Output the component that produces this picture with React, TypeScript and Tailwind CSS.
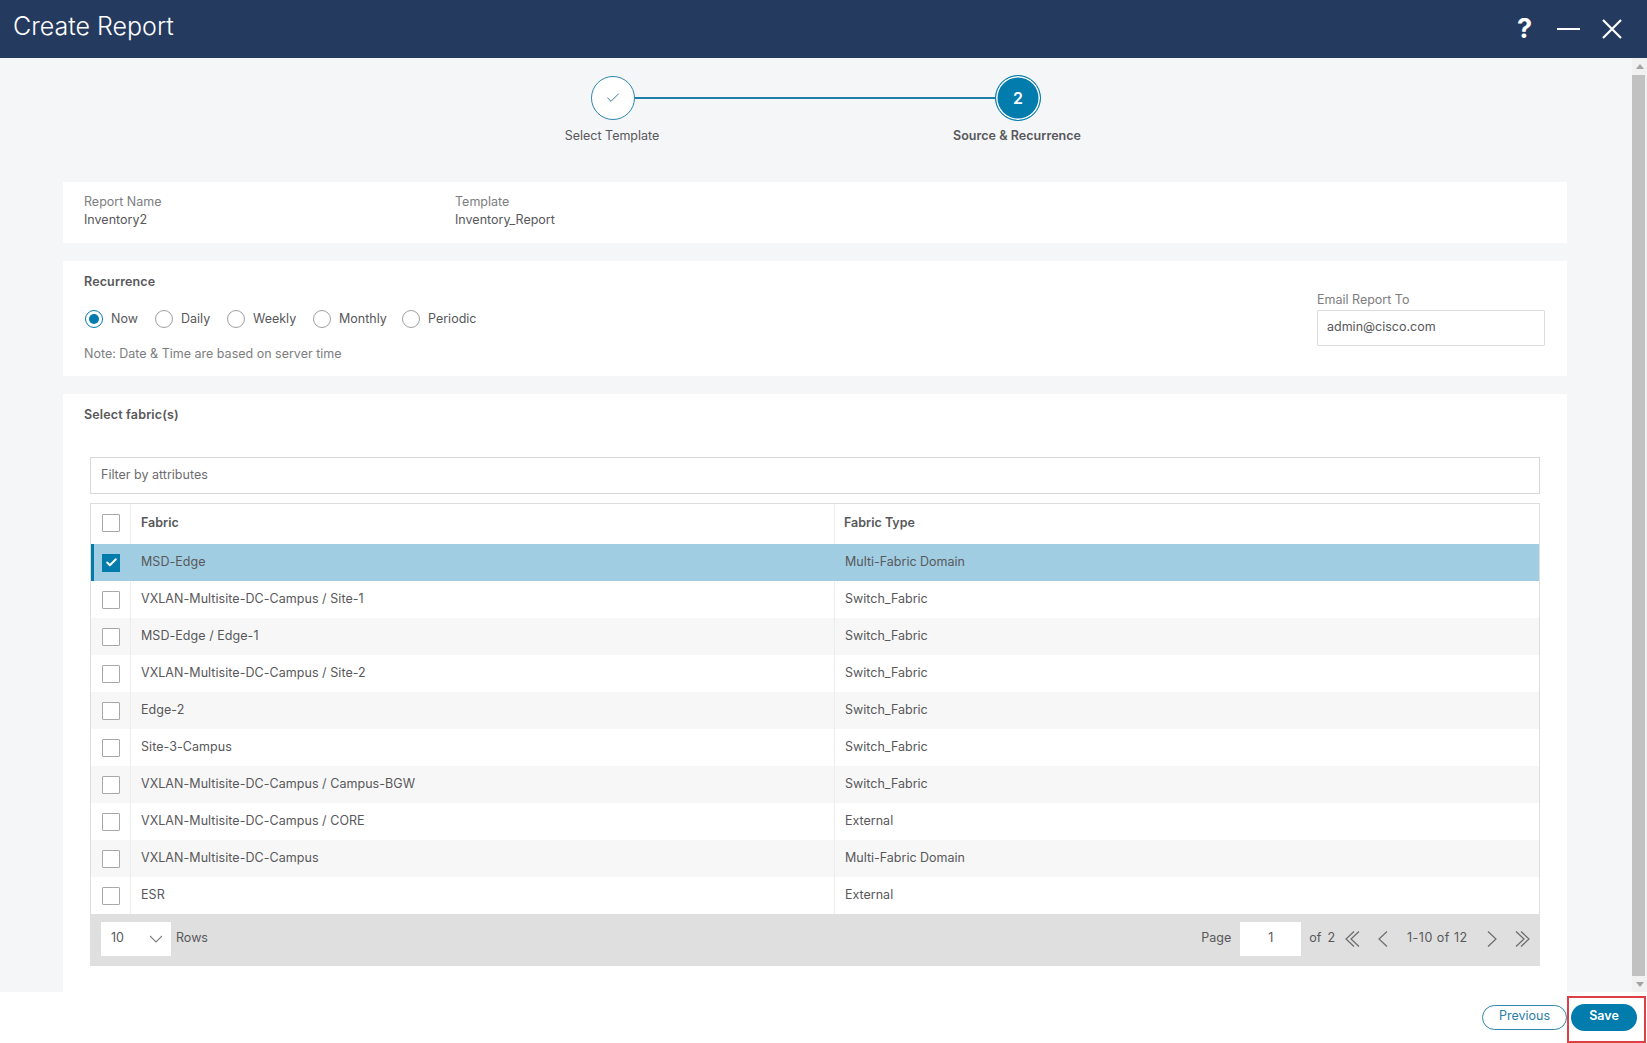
import React from "react";
import { Check } from "lucide-react";

const rows = [
  ["MSD-Edge", "Multi-Fabric Domain"],
  ["VXLAN-Multisite-DC-Campus / Site-1", "Switch_Fabric"],
  ["MSD-Edge / Edge-1", "Switch_Fabric"],
  ["VXLAN-Multisite-DC-Campus / Site-2", "Switch_Fabric"],
  ["Edge-2", "Switch_Fabric"],
  ["Site-3-Campus", "Switch_Fabric"],
  ["VXLAN-Multisite-DC-Campus / Campus-BGW", "Switch_Fabric"],
  ["VXLAN-Multisite-DC-Campus / CORE", "External"],
  ["VXLAN-Multisite-DC-Campus", "Multi-Fabric Domain"],
  ["ESR", "External"],
];

const radios = [
  ["Now", "w-[70px]"],
  ["Daily", "w-[72px]"],
  ["Weekly", "w-[86px]"],
  ["Monthly", "w-[89px]"],
  ["Periodic", ""],
];

function Box({ checked }: { checked?: boolean }) {
  if (checked) {
    return (
      <div className="w-[18px] h-[18px] bg-[#017cad] flex items-center justify-center">
        <Check size={13} strokeWidth={3.5} color="#fff" />
      </div>
    );
  }
  return <div className="w-[18px] h-[18px] bg-white border border-[#a8a8a8] rounded-[1px]" />;
}

function Chev({ dir, double }: { dir: "l" | "r"; double?: boolean }) {
  const w = double ? 16 : 11;
  const pts = (x: number) =>
    dir === "l" ? `${x + 8},0.5 ${x},8 ${x + 8},15.5` : `${x},0.5 ${x + 8},8 ${x},15.5`;
  return (
    <svg width={w} height={16} viewBox={`0 0 ${w} 16`} fill="none" stroke="#6b6b6b" strokeWidth="1.2">
      <polyline points={pts(1)} />
      {double && <polyline points={pts(6)} />}
    </svg>
  );
}

export default function App() {
  return (
    <div className="w-[1647px] h-[1043px] overflow-hidden bg-white flex flex-col font-['Inter','Liberation_Sans',sans-serif] text-[12.5px] text-[#58585b]">
      <header className="h-[58px] shrink-0 bg-[#243b5f] flex items-center text-white">
        <div className="ml-[13px] mb-[6px] text-[25px] leading-[46px] font-light flex-1">Create Report</div>
        <div className="font-bold text-[27px] leading-none mr-[25px] mb-[2px]">?</div>
        <div className="w-[23px] h-[2.5px] bg-white mr-[22px]" />
        <svg className="mr-[25px]" width="20" height="20" viewBox="0 0 20 20" stroke="#fff" strokeWidth="2.2" fill="none">
          <path d="M1 1 L19 19 M19 1 L1 19" />
        </svg>
      </header>

      <div className="h-[934px] shrink-0 flex">
        <main className="w-[1632px] bg-[#f5f6f8] pl-[63px] pr-[65px] flex flex-col">
          <div className="pt-[17px] h-[124px] shrink-0">
            <div className="flex items-center ml-[528px] w-[450px]">
              <div className="w-[44px] h-[44px] rounded-full bg-white border border-[#2d86ad] flex items-center justify-center shrink-0">
                <Check size={16} strokeWidth={1.4} color="#2a6a93" />
              </div>
              <div className="h-[1.5px] flex-1 bg-[#1f7fa8]" />
              <div className="w-[46px] h-[46px] rounded-full bg-[#017cad] border border-[#017cad] shadow-[inset_0_0_0_1.5px_#ffffff] flex items-center justify-center shrink-0 text-white font-semibold text-[16px]">
                2
              </div>
            </div>
            <div className="flex mt-[6px] ml-[449px] leading-[18px]">
              <div className="w-[200px] text-center">Select Template</div>
              <div className="w-[205px]" />
              <div className="w-[200px] text-center font-semibold tracking-[0.05px]">Source &amp; Recurrence</div>
            </div>
          </div>

          <section className="h-[61px] shrink-0 bg-white pl-[21px] pt-[11px] flex leading-[18px]">
            <div className="w-[371px]">
              <div className="text-[#7d7d80]">Report Name</div>
              <div>Inventory2</div>
            </div>
            <div>
              <div className="text-[#7d7d80]">Template</div>
              <div>Inventory_Report</div>
            </div>
          </section>

          <section className="h-[115px] shrink-0 mt-[18px] bg-white px-[22px] flex justify-between">
            <div>
              <div className="mt-[12px] ml-[-1px] leading-[18px] font-semibold tracking-[0.15px]">Recurrence</div>
              <div className="mt-[18px] flex items-center h-[20px]">
                {radios.map(([label, w], i) => (
                  <div key={label} className={`flex items-center ${w}`}>
                    <div className={`w-[18px] h-[18px] rounded-full bg-white flex items-center justify-center ${i === 0 ? "border-[1.5px] border-[#017cad]" : "border border-[#a0a0a0]"}`}>
                      {i === 0 && <div className="w-[10px] h-[10px] rounded-full bg-[#017cad]" />}
                    </div>
                    <span className="ml-[8px]">{label}</span>
                  </div>
                ))}
              </div>
              <div className="mt-[16px] ml-[-1px] leading-[18px] text-[#7d7d80]">Note: Date &amp; Time are based on server time</div>
            </div>
            <div className="w-[228px] pt-[30px]">
              <div className="leading-[18px] text-[#7d7d80]">Email Report To</div>
              <div className="mt-[1px] h-[36px] pb-[1px] border border-[#dcdcdc] rounded-[1px] flex items-center pl-[9px]">admin@cisco.com</div>
            </div>
          </section>

          <section className="h-[598px] shrink-0 mt-[18px] bg-white px-[27px] flex flex-col">
            <div className="ml-[-6px] mt-[12px] leading-[18px] font-semibold tracking-[0.15px]">Select fabric(s)</div>
            <div className="mt-[33px] h-[37px] pb-[1px] shrink-0 border border-[#d8d8d8] flex items-center pl-[10px] text-[#6d6d70]">Filter by attributes</div>
            <div className="mt-[9px] border-x border-t border-[#dedede]">
              <div className="h-[40px] flex items-center font-semibold">
                <div className="w-[40px] h-full pb-[2px] border-r border-[#ececec] flex items-center pl-[11px] shrink-0"><Box /></div>
                <div className="w-[704px] h-full pb-[1px] border-r border-[#ececec] flex items-center pl-[10px] shrink-0">Fabric</div>
                <div className="pl-[9px] pb-[1px]">Fabric Type</div>
              </div>
              {rows.map(([name, type], i) => {
                const sel = i === 0;
                return (
                  <div key={name} className={`h-[37px] flex items-center ${sel ? "bg-[#a1cde2] border-l-[3px] border-[#017cad]" : i % 2 === 0 ? "bg-[#f7f7f7]" : "bg-white"}`}>
                    <div className={`${sel ? "w-[37px] pl-[8px]" : "w-[40px] pl-[11px] border-r border-[#ececec]"} h-full flex items-center shrink-0`}><Box checked={sel} /></div>
                    <div className={`w-[704px] h-full pb-[1px] flex items-center pl-[10px] shrink-0 tracking-[0.05px] ${sel ? "" : "border-r border-[#ececec]"}`}>{name}</div>
                    <div className="pl-[10px] pb-[1px]">{type}</div>
                  </div>
                );
              })}
            </div>
            <div className="h-[52px] pb-[3px] bg-[#dfdfdf] flex items-center pl-[11px] pr-[9px] shrink-0">
              <div className="w-[70px] h-[34px] bg-white flex items-center justify-between pl-[10px] pr-[8px]">
                <span>10</span>
                <svg width="14" height="8" viewBox="0 0 14 8" fill="none" stroke="#808080" strokeWidth="1.1"><polyline points="1,1 7,7 13,1" /></svg>
              </div>
              <span className="ml-[5px] flex-1">Rows</span>
              <span>Page</span>
              <div className="ml-[9px] w-[61px] h-[34px] bg-white flex items-center justify-center">1</div>
              <span className="ml-[8px]">of</span>
              <span className="ml-[6px]">2</span>
              <span className="ml-[10px] flex"><Chev dir="l" double /></span>
              <span className="ml-[17px] flex"><Chev dir="l" /></span>
              <span className="ml-[18px] w-[61px] tracking-[0.5px] whitespace-nowrap">1-10 of 12</span>
              <span className="ml-[19px] flex"><Chev dir="r" /></span>
              <span className="ml-[17px] flex"><Chev dir="r" double /></span>
            </div>
          </section>
        </main>

        <div className="w-[15px] bg-[#f1f1f1] flex flex-col items-center">
          <div className="h-[17px] flex items-center justify-center">
            <div className="w-0 h-0 border-x-[4px] border-x-transparent border-b-[5px] border-b-[#a3a3a3]" />
          </div>
          <div className="w-[13px] flex-1 bg-[#c1c1c1] self-start" />
          <div className="h-[16px] flex items-center justify-center">
            <div className="w-0 h-0 border-x-[4px] border-x-transparent border-t-[5px] border-t-[#a3a3a3]" />
          </div>
        </div>
      </div>

      <footer className="h-[51px] shrink-0 flex justify-end items-start">
        <button className="mt-[13px] w-[85px] h-[25px] pb-[2px] rounded-full border border-[#2d86ad] text-[#2a7ea6] bg-white flex items-center justify-center">Previous</button>
        <div className="w-[79px] h-[47px] mt-[4px] mr-[1px] border-2 border-[#dc3f45] flex items-start">
          <button className="mt-[6px] ml-[2px] w-[66px] h-[27px] pb-[2px] rounded-full bg-[#017cad] text-white font-semibold flex items-center justify-center">Save</button>
        </div>
      </footer>
    </div>
  );
}
